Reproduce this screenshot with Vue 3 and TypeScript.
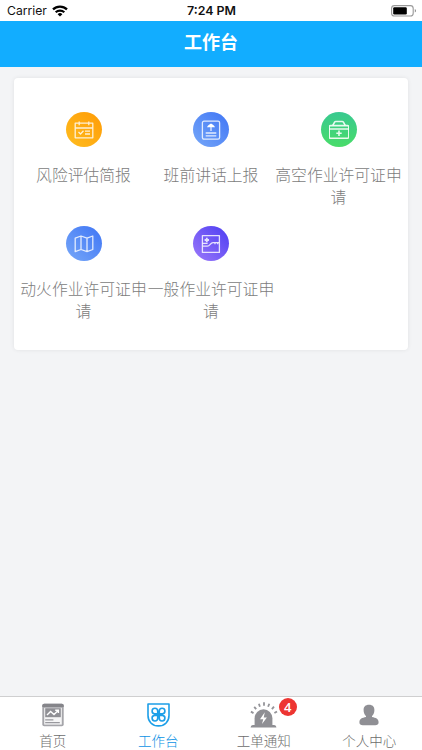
<script setup lang="ts">
type IconName = 'calendar' | 'report' | 'kit' | 'map' | 'chart'
type TabName = 'home' | 'work' | 'alarm' | 'user'

const apps: { icon: IconName; label: string }[] = [
  { icon: 'calendar', label: '风险评估简报' },
  { icon: 'report', label: '班前讲话上报' },
  { icon: 'kit', label: '高空作业许可证申请' },
  { icon: 'map', label: '动火作业许可证申请' },
  { icon: 'chart', label: '一般作业许可证申请' },
]

const tabs: { icon: TabName; label: string; badge?: number }[] = [
  { icon: 'home', label: '首页' },
  { icon: 'work', label: '工作台' },
  { icon: 'alarm', label: '工单通知', badge: 4 },
  { icon: 'user', label: '个人中心' },
]
const active: TabName = 'work'
</script>

<template>
  <div class="screen">
    <div class="status">
      <div class="carrier">
        <span>Carrier</span>
        <svg class="wifi" width="16" height="12" viewBox="0 0 16 12" fill="none" stroke="#000" stroke-width="2.2">
          <path d="M1 4.4a10 10 0 0 1 14 0" />
          <path d="M3.7 7.3a6.2 6.2 0 0 1 8.6 0" />
          <path d="M8 11.6 5.6 9.2a3.4 3.4 0 0 1 4.8 0z" fill="#000" stroke="none" />
        </svg>
      </div>
      <span class="time">7:24 PM</span>
      <svg class="battery" width="26" height="12" viewBox="0 0 26 12">
        <rect x="0.6" y="0.6" width="21.6" height="10.4" rx="2.8" fill="#fff" stroke="#999" stroke-width="1.1" />
        <rect x="2.2" y="2.2" width="13.6" height="7.2" rx="1.2" fill="#000" />
        <path d="M23.8 4v3.6q1.2-.6 1.2-1.8t-1.2-1.8z" fill="#888" />
      </svg>
    </div>
    <header class="title">工作台</header>

    <main class="content">
      <section class="card">
        <div v-for="app in apps" :key="app.label" class="app">
          <div class="disc" :class="app.icon">
            <svg width="20" height="20" viewBox="0 0 20 20" fill="none" stroke="#fff" stroke-opacity=".82" stroke-width="1.3" stroke-linejoin="round">
              <template v-if="app.icon === 'calendar'">
                <path d="M1.2 3.2h17.6v14.6H1.2zM1.2 8h17.6M5.2 1.4v3.8M14.8 1.4v3.8M4.5 12l2 2 3-3.2M11 11.2h5M11 14h5" />
              </template>
              <template v-else-if="app.icon === 'report'">
                <rect x="1.4" y="1.2" width="17.2" height="18" rx="1.6" />
                <path d="M10 11V5.2M4.7 13h10.6M4.7 15.9h10.6" />
                <path d="M6 7.2C6.8 5 8.4 4.6 10 3.4c1.6 1.2 3.2 1.6 4 3.8z" fill="#fff" stroke="none" />
              </template>
              <template v-else-if="app.icon === 'kit'">
                <g stroke-width="1.6" stroke-opacity=".88">
                  <rect x=".2" y="5.6" width="19.6" height="12.6" rx="1.2" />
                  <path d="M0 9h20M3.8 5.4l1.8-3.2q.4-.7 1.2-.7h6.4q.8 0 1.2.7l1.8 3.2" />
                  <path d="M10 10.6v5.4M7.3 13.3h5.4" />
                </g>
              </template>
              <template v-else-if="app.icon === 'map'">
                <path d="M1.2 4.2 7 2l6 2.2L18.8 2v13.5L13 17.7l-6-2.2-5.8 2.2zM7 2v13.5M13 4.2v13.5" />
              </template>
              <template v-else>
                <rect x="1.4" y="1.6" width="17" height="16.8" />
                <path d="M5.8 3.8v4.4M3.6 6h4.4" stroke-width="1.8" />
                <path d="M1.4 9.3h5.2M1.8 12.2h4.6c2.8 0 2.8-3.6 5.6-3.6h6M14 8.6v1.7M16.7 8.6v1.7" />
              </template>
            </svg>
          </div>
          <div class="label">{{ app.label }}</div>
        </div>
      </section>
    </main>

    <nav class="tabs">
      <div v-for="tab in tabs" :key="tab.label" class="tab" :class="{ active: tab.icon === active }">
        <div class="tab-icon">
          <svg v-if="tab.icon === 'home'" width="28" height="28" viewBox="0 0 28 28">
            <rect x="3.3" y="2.7" width="21.4" height="22.6" rx="1.8" fill="#a5a5aa" />
            <path d="M3.3 6V4.5q0-1.8 1.8-1.8h17.8q1.8 0 1.8 1.8V6z" fill="#85858a" />
            <rect x="5.2" y="6.8" width="17.6" height="16.8" fill="#f5f5f6" />
            <rect x="6.2" y="7.2" width="15.6" height="9" fill="#909095" />
            <path d="m8 14 3.6-3.5 3.4 3 4.4-4.2m-3.2 0h3.2v2.8" fill="none" stroke="#fff" stroke-width="1.4" />
            <path d="M6.2 18.9h8.2M6.2 21.7h14.6" stroke="#99999e" stroke-width="1.3" />
          </svg>
          <svg v-else-if="tab.icon === 'work'" width="28" height="28" viewBox="0 0 28 28" fill="none" stroke="#1d9fe8" stroke-width="1.6">
            <path d="M4 3h21v11.5C25 20.5 20.8 24.9 14.5 24.9S4 20.5 4 14.5z" stroke-linejoin="round" />
            <path d="M13.7 12.8h-3.2a2.8 2.8 0 1 1 3.2-2.8zM15.3 12.8h3.2a2.8 2.8 0 1 0-3.2-2.8zM13.7 14.4h-3.2a2.8 2.8 0 1 0 3.2 2.8zM15.3 14.4h3.2a2.8 2.8 0 1 1-3.2 2.8z" />
          </svg>
          <svg v-else-if="tab.icon === 'alarm'" width="28" height="28" viewBox="0 0 28 28">
            <path d="M4.6 24.5v-7.3a8.9 8.9 0 0 1 17.8 0v7.3z" fill="#8f8f94" />
            <path d="M.6 26.5q0-2.5 2.2-2.5h21.4q2.2 0 2.2 2.5z" fill="#8f8f94" />
            <path d="m14.8 11.3-4.8 7h3.2L12 23l4.9-6.4h-3.2z" fill="#fff" />
            <path d="m.9 10.6 2.6 1.5M4.2 5.8l2 2.4M8.9 2.7l1 3.1M14 1.3v3.4M19.3 2.7l-1.2 3.1M24 5.7l-2.1 2.5M27 10.4l-2.6 1.6" fill="none" stroke="#949499" stroke-width="1.8" />
          </svg>
          <svg v-else width="28" height="28" viewBox="0 0 28 28" fill="#8f8f94">
            <path d="M14 3.8c3.7 0 5.4 2.1 5.4 5.3 0 2.7-.9 4.7-2.4 6v1c3.8.7 6.6 1.8 6.6 5.1 0 2.2-1.4 3-3.4 3H7.8c-2 0-3.4-.8-3.4-3 0-3.3 2.8-4.4 6.6-5.1v-1c-1.5-1.3-2.4-3.3-2.4-6 0-3.2 1.7-5.3 5.4-5.3z" />
          </svg>
          <span v-if="tab.badge" class="badge">{{ tab.badge }}</span>
        </div>
        <span class="tab-label">{{ tab.label }}</span>
      </div>
    </nav>
  </div>
</template>

<style>
body {
  margin: 0;
}
</style>

<style scoped>
.screen {
  display: flex;
  flex-direction: column;
  height: 750px;
  background: #f3f4f6;
  font-family: "Noto Sans CJK SC", sans-serif;
  overflow: hidden;
}
.status {
  display: grid;
  grid-template-columns: 1fr auto 1fr;
  align-items: center;
  box-sizing: border-box;
  height: 21px;
  padding: 1px 6px 0 7px;
  background: #fff;
  color: #111;
  font: 12.2px/20px Inter, sans-serif;
}
.carrier {
  display: flex;
  align-items: center;
  gap: 5px;
}
.time {
  font-weight: 600;
  font-size: 12.4px;
}
.battery {
  justify-self: end;
  margin: 0 -1px 1px 0;
}
.title {
  height: 46px;
  background: #12adff;
  color: #fff;
  text-align: center;
  font-size: 18px;
  font-weight: 700;
  line-height: 41px;
}
.content {
  flex: 1;
  padding: 11px 14px 0;
}
.card {
  display: grid;
  grid-template-columns: repeat(3, 127.5px);
  grid-auto-rows: 114px;
  justify-content: center;
  box-sizing: border-box;
  height: 272px;
  padding-top: 34px;
  background: #fff;
  border-radius: 4px;
  box-shadow: 0 0 4px rgba(0, 0, 0, 0.08);
}
.app {
  display: flex;
  flex-direction: column;
  align-items: center;
}
.disc {
  display: flex;
  align-items: center;
  justify-content: center;
  width: 36px;
  height: 35px;
  border-radius: 50%;
}
.calendar {
  background: linear-gradient(45deg, #ffbd20, #ff9b05);
}
.report,
.map {
  background: linear-gradient(45deg, #76a7f8, #3f75f5);
}
.kit {
  background: linear-gradient(#38c990, #49dc69);
}
.chart {
  background: linear-gradient(45deg, #9c79fa, #4c3df2);
}
.label {
  margin-top: 17px;
  color: #7c7c7c;
  font-size: 15.8px;
  font-weight: 300;
  line-height: 22px;
  text-align: center;
}
.tabs {
  display: grid;
  grid-template-columns: repeat(4, 1fr);
  box-sizing: border-box;
  height: 54px;
  border-top: 1px solid #cfcfd0;
  background: #fff;
}
.tab {
  display: flex;
  flex-direction: column;
  align-items: center;
  padding-top: 4px;
  color: #6c6c6c;
}
.tab-icon {
  position: relative;
  width: 28px;
  height: 28px;
}
.tab-icon svg {
  display: block;
}
.tab-label {
  margin-top: 1px;
  font-size: 13.5px;
  font-weight: 300;
  line-height: 20px;
}
.active {
  color: #0c92e4;
}
.badge {
  position: absolute;
  top: -3px;
  left: 29px;
  width: 18px;
  height: 18px;
  border-radius: 50%;
  background: #ed3532;
  color: #fff;
  font: 600 13px/18px "Open Sans", sans-serif;
  text-align: center;
}
</style>
